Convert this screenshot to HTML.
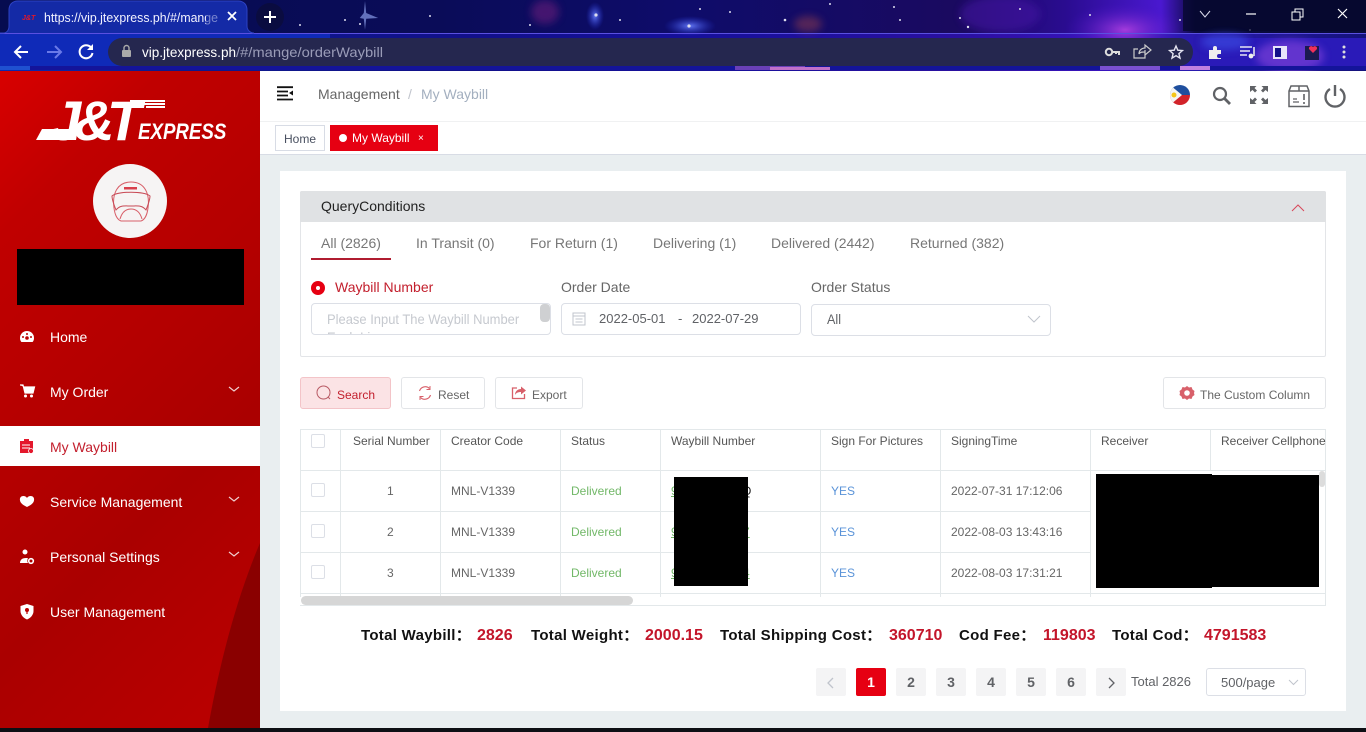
<!DOCTYPE html>
<html><head><meta charset="utf-8"><title>My Waybill</title>
<style>
*{box-sizing:border-box}
html,body{margin:0;padding:0;width:1366px;height:732px;overflow:hidden;background:#e9eef0;font-family:"Liberation Sans",sans-serif}
.a{position:absolute;white-space:nowrap}
.m{color:#fff;font-size:14px;line-height:16px;left:50px}
.th{top:434px;font-size:12px;line-height:14px;color:#555}
.td{font-size:12px;line-height:14px;color:#666}
.v{background:#e3e8ea;width:1px}
.h{background:#e3e8ea;height:1px}
.cb{left:311px;width:14px;height:14px;border:1px solid #dcdfe6;border-radius:2px;background:#fff}
.pg{top:668px;width:30px;height:28px;background:#f4f4f5;color:#606266;font-size:14px;font-weight:bold;text-align:center;line-height:28px;border-radius:2px}
.btn{top:377px;height:32px;border:1px solid #e3e5e8;border-radius:3px;background:#fff;font-size:12px;color:#666;line-height:34px}
.tab{top:235px;font-size:14px;line-height:16px;color:#777}
.lbl{top:279px;font-size:14px;line-height:16px;color:#666}
.box{border:1px solid #dcdfe6;border-radius:4px;background:#fff;height:32px}
.s{font-size:15px;font-weight:bold;line-height:18px;top:627px;color:#111;letter-spacing:.3px}
.r{color:#c3152a;font-size:16px;letter-spacing:0}
.lg{color:#fff;font-weight:bold;font-style:italic;font-size:56px;line-height:56px;top:93px}
</style></head><body>
<svg class="a" style="left:0;top:0" width="1366" height="71">
<defs>
<linearGradient id="g" x1="0" x2="1"><stop offset="0" stop-color="#0b2ab0"/><stop offset=".12" stop-color="#0c1a8c"/><stop offset=".35" stop-color="#12108a"/><stop offset=".5" stop-color="#15109a"/><stop offset=".7" stop-color="#2a10a0"/><stop offset=".82" stop-color="#3a14c0"/><stop offset=".87" stop-color="#2a1ab0"/><stop offset="1" stop-color="#14127a"/></linearGradient>
<linearGradient id="tg" x1="0" x2="1"><stop offset="0" stop-color="#060c50"/><stop offset=".32" stop-color="#0a0c58"/><stop offset=".5" stop-color="#0e0c6a"/><stop offset=".7" stop-color="#1a0a60"/><stop offset=".78" stop-color="#2a0c90"/><stop offset=".85" stop-color="#4a18d0"/><stop offset=".875" stop-color="#0a0a40"/><stop offset="1" stop-color="#080a38"/></linearGradient>
<radialGradient id="p"><stop offset="0" stop-color="#b040e0" stop-opacity=".9"/><stop offset="1" stop-color="#4010c0" stop-opacity="0"/></radialGradient>
<radialGradient id="b"><stop offset="0" stop-color="#6a80ff" stop-opacity=".9"/><stop offset="1" stop-color="#2030d0" stop-opacity="0"/></radialGradient>
<filter id="bl" x="-50%" y="-50%" width="200%" height="200%"><feGaussianBlur stdDeviation="4"/></filter>
</defs>
<rect width="1366" height="71" fill="url(#g)"/>
<rect width="1366" height="33" fill="url(#tg)"/>
<ellipse cx="1125" cy="30" rx="60" ry="28" fill="url(#p)"/>
<ellipse cx="690" cy="26" rx="26" ry="10" fill="url(#b)"/>
<ellipse cx="595" cy="16" rx="9" ry="14" fill="url(#b)"/>
<ellipse cx="808" cy="24" rx="14" ry="8" fill="#8a3a50" opacity=".55" filter="url(#bl)"/>
<ellipse cx="545" cy="12" rx="14" ry="12" fill="#6a1a7a" opacity=".6" filter="url(#bl)"/>
<ellipse cx="125" cy="14" rx="12" ry="14" fill="url(#b)"/>
<ellipse cx="1000" cy="14" rx="40" ry="18" fill="#4a14a8" opacity=".5" filter="url(#bl)"/>
<g fill="#dde">
<circle cx="530" cy="25" r="1"/><circle cx="620" cy="20" r="1"/><circle cx="700" cy="9" r="1"/><circle cx="730" cy="12" r="1"/><circle cx="900" cy="20" r="1"/><circle cx="960" cy="18" r="1"/><circle cx="968" cy="27" r="1.2"/><circle cx="1020" cy="9" r="1"/><circle cx="1090" cy="15" r="1"/><circle cx="1180" cy="20" r="1"/><circle cx="345" cy="20" r="1"/><circle cx="300" cy="25" r="1"/><circle cx="360" cy="24" r="1"/><circle cx="1250" cy="30" r="1"/><circle cx="894" cy="7" r="1"/><circle cx="430" cy="16" r="1"/><circle cx="830" cy="4" r="1"/><circle cx="596" cy="15" r="1.6"/><circle cx="689" cy="26" r="1.6"/><circle cx="785" cy="20" r="1.3"/>
</g>
<path d="M365 1l1.200 12 12 5-12 .8-1.200 11-1.200-11-4-.8 4-5z" fill="#9fb4ff" opacity=".6"/>
<rect x="1183" width="183" height="31" fill="#06082c" opacity=".75"/>
<rect y="33" width="1366" height="1" fill="#5a50e0"/>
<!-- tab -->
<path d="M0 33h3c4 0 6-3 6-7V10c0-5 3-9 9-9h220c6 0 9 4 9 9v16c0 4 3 7 7 7" fill="#142aa6" stroke="#2c42c4"/>
<rect y="34" width="330" height="36" fill="#0f2ab8"/>
<rect x="1200" y="38" width="166" height="32" fill="#2a1ab8"/>
<ellipse cx="1290" cy="56" rx="34" ry="16" fill="#7a40d8" opacity=".7" filter="url(#bl)"/>
<ellipse cx="1225" cy="42" rx="24" ry="8" fill="#3a48e0" opacity=".7" filter="url(#bl)"/>
<rect y="66" width="1366" height="4" fill="#14149a"/>
<rect x="1100" y="66" width="60" height="4" fill="#7a50d0"/>
<rect x="1180" y="66" width="30" height="4" fill="#c080e0"/>
<rect x="735" y="66" width="70" height="4" fill="#6a40b8"/>
<rect x="770" y="67" width="60" height="3" fill="#c070c8"/>
<rect x="0" y="66" width="30" height="4" fill="#1f50d0"/>
<!-- omnibox -->
<rect x="108" y="38" width="1085" height="28" rx="14" fill="#25274f"/>
<text x="22" y="20" font-family="Liberation Sans" font-size="7" font-weight="bold" font-style="italic" fill="#e0182a">J&amp;T</text>
<text x="44" y="22" font-family="Liberation Sans" font-size="12.5" fill="#f2f2ff" textLength="174" lengthAdjust="spacingAndGlyphs">https://vip.jtexpress.ph/#/mange</text>
<rect x="206" y="6" width="16" height="20" fill="#142aa6" opacity=".55"/>
<path d="M228 12l8 8M236 12l-8 8" stroke="#fff" stroke-width="1.8"/>
<circle cx="270" cy="17" r="14" fill="#0a0c40"/>
<path d="M264 17h12M270 11v12" stroke="#fff" stroke-width="2"/>
<path d="M28 52H16m5-6l-6 6 6 6" stroke="#fff" stroke-width="2" fill="none"/>
<path d="M47 52h14m-6-6l6 6-6 6" stroke="#6a7ae8" stroke-width="2" fill="none"/>
<path d="M92 49a6.500 6.500 0 1 0 .5 4" stroke="#fff" stroke-width="2" fill="none"/><path d="M93 44v6h-6z" fill="#fff"/>
<rect x="122" y="50" width="9" height="7" rx="1" fill="#aaa"/><path d="M124 50v-2a2.500 2.500 0 0 1 5 0v2" stroke="#aaa" stroke-width="1.400" fill="none"/>
<text x="142" y="57" font-family="Liberation Sans" font-size="14" fill="#fff" textLength="94" lengthAdjust="spacingAndGlyphs">vip.jtexpress.ph</text>
<text x="236" y="57" font-family="Liberation Sans" font-size="14" fill="#9a9cb8" textLength="147" lengthAdjust="spacingAndGlyphs">/#/mange/orderWaybill</text>
<circle cx="1109" cy="52" r="3.200" fill="none" stroke="#ddd" stroke-width="2"/><path d="M1112 52h7v3M1116 52v2" stroke="#ddd" stroke-width="2" fill="none"/>
<path d="M1145 50v8h-11v-9h4M1139 54c0-4 3-6 6-6v-3l6 5-6 5v-3c-3 0-5 0-6 2z" stroke="#ccc" stroke-width="1.200" fill="none"/>
<path d="M1176 46l1.800 4.200 4.600.4-3.500 3 1.100 4.500-4-2.400-4 2.400 1.100-4.500-3.500-3 4.600-.4z" fill="none" stroke="#e4e4f0" stroke-width="1.400"/>
<path d="M1209 50h4v-2a2 2 0 0 1 4 0v2h4v4h-2a2 2 0 0 0 0 4h2v1h-12z" fill="#eee"/>
<path d="M1240 47h12M1240 51h10M1240 55h7" stroke="#e6e6f4" stroke-width="1.500"/><path d="M1254 47v9" stroke="#eee" stroke-width="1.500"/><circle cx="1251" cy="56" r="2.400" fill="#eee"/>
<rect x="1273" y="46" width="14" height="13" fill="#e8e4fa"/><rect x="1275" y="48" width="6" height="9" fill="#14128a"/>
<rect x="1305" y="46" width="14" height="14" fill="#1a1a50"/><path d="M1313 53l-4-4a2.300 2.300 0 0 1 4-2 2.300 2.300 0 0 1 4 2z" fill="#f0305a"/>
<circle cx="1344" cy="47" r="1.500" fill="#ddd"/><circle cx="1344" cy="52" r="1.500" fill="#ddd"/><circle cx="1344" cy="57" r="1.500" fill="#ddd"/>
<path d="M1200 11l5 6 5-6" stroke="#dde" fill="none"/>
<path d="M1246 14h10" stroke="#fff" stroke-width="1.200"/>
<path d="M1292 12h8v8h-8zM1295 12v-3h8v8h-3" stroke="#fff" stroke-width="1" fill="none"/>
<path d="M1338 9l9 9M1347 9l-9 9" stroke="#fff" stroke-width="1.200"/>
</svg>

<!-- sidebar -->
<div class="a" style="left:0;top:71px;width:260px;height:657px;background:linear-gradient(135deg,#d80000 0%,#c00000 18%,#b40000 45%,#aa0000 65%,#bc0000 100%)"></div>
<svg class="a" style="left:0;top:540px" width="260" height="188"><path d="M260 3V188H208C222 110 240 50 260 3z" fill="#8a0000"/></svg>
<svg class="a" style="left:30px;top:96px" width="135" height="46"><path d="M6 44l6-11h36l-2 11z" fill="#fff"/><path d="M100 4h48l-2 2H100zM113 7h32l-2 2H113zM116 10h24l-2 2H116z" fill="#fff"/></svg>
<div class="a lg" style="left:50px">J</div>
<div class="a lg" style="left:74px">&amp;</div>
<div class="a lg" style="left:107px">T</div>
<div class="a" style="left:138px;top:119px;color:#fff;font-weight:bold;font-style:italic;font-size:22px;line-height:26px;transform-origin:0 0;transform:scaleX(.85)">EXPRESS</div>
<div class="a" style="left:93px;top:164px;width:74px;height:74px;border-radius:50%;background:#f6f4f4"></div>
<svg class="a" style="left:108px;top:178px" width="46" height="46"><path d="M6 30c-2-14 3-26 17-26s19 12 17 26c-1 8-4 12-7 13H13c-3-1-6-5-7-13z" fill="none" stroke="#d8606a" stroke-width="1"/><path d="M4 18c6-5 32-5 38 0 0 4-2 9-4 14-4-5-8-4-15-4s-11-1-15 4c-2-5-4-10-4-14z" fill="none" stroke="#c84a56" stroke-width="1"/><path d="M12 41c2-7 6-10 11-10s9 3 11 10" fill="none" stroke="#d8606a"/><path d="M16 9h13v2.500H16z" fill="#d8404c"/></svg>
<div class="a" style="left:17px;top:249px;width:227px;height:56px;background:#000"></div>

<div class="a" style="left:0;top:426px;width:260px;height:40px;background:#fff"></div>
<div class="a m" style="top:329px">Home</div>
<div class="a m" style="top:384px">My Order</div>
<div class="a m" style="top:439px;color:#c3202e">My Waybill</div>
<div class="a m" style="top:494px">Service Management</div>
<div class="a m" style="top:549px">Personal Settings</div>
<div class="a m" style="top:604px">User Management</div>
<svg class="a" style="left:0;top:320px" width="260" height="310">
<g fill="none" stroke="#f0d0d0" stroke-width="1.200"><path d="M229 67l5 4 5-4M229 177l5 4 5-4M229 232l5 4 5-4"/></g>
<path d="M27 11a7 7 0 0 0-7 7c0 2 .6 3 1.400 4h11.200c.8-1 1.400-2 1.400-4a7 7 0 0 0-7-7z" fill="#fff"/><circle cx="27" cy="18" r="1.800" fill="#b00"/><circle cx="23" cy="17" r="1" fill="#b00"/><circle cx="31" cy="17" r="1" fill="#b00"/><circle cx="27" cy="14" r="1" fill="#b00"/>
<path d="M20 65h3l2 8h8l1.500-6H24" fill="#fff" stroke="#fff" stroke-width="1.200"/><circle cx="25.500" cy="76" r="1.500" fill="#fff"/><circle cx="31.500" cy="76" r="1.500" fill="#fff"/>
<path d="M20 121h4v-2h5v2h4v10l-1 2H20z" fill="#e4182c"/><path d="M22 125h8M22 128h8" stroke="#fff"/><circle cx="31" cy="131" r="2.500" fill="#e4182c" stroke="#fff" stroke-width=".8"/>
<path d="M27 178c-1.500-3-8-3-7 2.500.5 3 4 5 7 6.500 3-1.500 6.500-3.500 7-6.500 1-5.500-5.500-5.500-7-2.500z" fill="#fff"/>
<circle cx="25" cy="232" r="2.500" fill="#fff"/><path d="M20 243c0-3 2-5 6-5 1 0 2 .2 2 .5-1 1.500-1 3 0 4.500z" fill="#fff"/><circle cx="31" cy="241" r="2.300" fill="none" stroke="#fff" stroke-width="1.600"/>
<path d="M27 284l6.500 2v5c0 4-3 7-6.500 8.500-3.500-1.500-6.500-4.500-6.500-8.500v-5z" fill="#fff"/><circle cx="27" cy="290" r="2" fill="#b00"/><path d="M27 291v3" stroke="#b00" stroke-width="1.200"/>
</svg>

<!-- header -->
<div class="a" style="left:260px;top:71px;width:1106px;height:51px;background:#fff;border-bottom:1px solid #f0f1f2"></div>
<div class="a" style="left:260px;top:122px;width:1106px;height:33px;background:#fff;border-bottom:1px solid #d8dce5"></div>
<svg class="a" style="left:277px;top:86px" width="17" height="15"><path d="M0 1.200h16M0 5.500h11M0 9.500h11M0 13.500h16" stroke="#111" stroke-width="1.800"/><path d="M16 4.500v5l-4-2.500z" fill="#111"/></svg>
<div class="a" style="left:318px;top:86px;font-size:14px;line-height:16px;color:#666">Management</div>
<div class="a" style="left:408px;top:86px;font-size:14px;line-height:16px;color:#c0c4cc">/</div>
<div class="a" style="left:421px;top:86px;font-size:14px;line-height:16px;color:#a3afbf">My Waybill</div>
<svg class="a" style="left:1160px;top:80px" width="190" height="30">
<defs><clipPath id="fl"><circle cx="20" cy="15" r="10"/></clipPath></defs>
<g clip-path="url(#fl)"><rect x="10" y="5" width="20" height="10" fill="#1f4f9e"/><rect x="10" y="15" width="20" height="10" fill="#d2232a"/><path d="M10 5l12 10-12 10z" fill="#f4f4f4"/><circle cx="14" cy="15" r="2.500" fill="#f5c518"/></g>
<circle cx="60" cy="14" r="6" fill="none" stroke="#606266" stroke-width="2.200"/><path d="M64.500 18.500l5.500 5.500" stroke="#606266" stroke-width="2.800"/>
<g fill="#606266"><path d="M90 6h6.500l-2 2 2.500 2.500-2 2L92.500 10l-2.500 2zM108 6h-6.500l2 2-2.500 2.500 2 2 2.500-2.500 2.500 2z"/><path d="M90 24h6.500l-2-2 2.500-2.500-2-2-2.500 2.500-2.500-2zM108 24h-6.500l2-2-2.500-2.500 2-2 2.500 2.500 2.500-2z"/></g>
<path d="M129 11l2-5h16l2 5v15.500h-20zM129 11h20M139 6v5" fill="none" stroke="#606266" stroke-width="1.500"/><path d="M133 22h6M133 19h4" stroke="#606266" stroke-width="1.300"/><path d="M144 14v6M144 22v2" stroke="#606266" stroke-width="1.600"/>
<path d="M170 9a9.500 9.500 0 1 0 10 0" fill="none" stroke="#606266" stroke-width="2.400"/><path d="M175 5v11" stroke="#606266" stroke-width="2.400"/>
</svg>
<div class="a" style="left:275px;top:125px;width:50px;height:26px;border:1px solid #d8dce5;background:#fff;font-size:12px;line-height:26px;color:#495060;text-align:center">Home</div>
<div class="a" style="left:330px;top:125px;width:108px;height:26px;background:#e60012;font-size:12px;line-height:27px;color:#fff"><span class="a" style="left:9px;top:9px;width:8px;height:8px;border-radius:50%;background:#fff"></span><span class="a" style="left:22px">My Waybill</span><span class="a" style="left:88px;font-size:10px">×</span></div>

<!-- main card -->
<div class="a" style="left:280px;top:171px;width:1066px;height:540px;background:#fff"></div>
<div class="a" style="left:300px;top:191px;width:1026px;height:166px;border:1px solid #e3e5e8;border-radius:2px;background:#fff"></div>
<div class="a" style="left:300px;top:191px;width:1026px;height:31px;background:#e0e2e4;border-radius:2px 2px 0 0"></div>
<div class="a" style="left:321px;top:198px;font-size:14px;line-height:16px;color:#222">QueryConditions</div>
<svg class="a" style="left:1291px;top:203px" width="14" height="9"><path d="M1 8l6-6 6 6" stroke="#d8485a" fill="none"/></svg>
<div class="a tab" style="left:321px">All (2826)</div>
<div class="a" style="left:311px;top:258px;width:80px;height:2px;background:#b01c30"></div>
<div class="a tab" style="left:416px">In Transit (0)</div>
<div class="a tab" style="left:530px">For Return (1)</div>
<div class="a tab" style="left:653px">Delivering (1)</div>
<div class="a tab" style="left:771px">Delivered (2442)</div>
<div class="a tab" style="left:910px">Returned (382)</div>

<div class="a" style="left:311px;top:281px;width:14px;height:14px;border-radius:50%;background:#e60012"></div>
<div class="a" style="left:316px;top:286px;width:4px;height:4px;border-radius:50%;background:#fff"></div>
<div class="a lbl" style="left:335px;color:#c3202e">Waybill Number</div>
<div class="a lbl" style="left:561px">Order Date</div>
<div class="a lbl" style="left:811px">Order Status</div>

<div class="a box" style="left:311px;top:303px;width:240px;overflow:hidden"><div class="a" style="left:15px;top:7px;font-size:14px;line-height:16px;color:#c6c9cf;transform-origin:0 0;transform:scaleX(.925)">Please Input The Waybill Number</div><div class="a" style="left:15px;top:25px;font-size:14px;line-height:16px;color:#c6c9cf;transform-origin:0 0;transform:scaleX(.925)">Each Line</div></div>
<div class="a" style="left:540px;top:304px;width:10px;height:18px;background:#cfd0d2;border-radius:4px"></div>
<div class="a box" style="left:561px;top:303px;width:240px"></div>
<svg class="a" style="left:572px;top:311px" width="15" height="15"><rect x="1" y="2" width="12" height="12" fill="none" stroke="#c0c4cc"/><path d="M1 5h12M3.500 8h7M3.500 11h7" stroke="#c0c4cc"/></svg>
<div class="a" style="left:599px;top:311px;font-size:13px;line-height:16px;color:#606266">2022-05-01</div>
<div class="a" style="left:678px;top:311px;font-size:13px;line-height:16px;color:#606266">-</div>
<div class="a" style="left:692px;top:311px;font-size:13px;line-height:16px;color:#606266">2022-07-29</div>
<div class="a box" style="left:811px;top:304px;width:240px"></div>
<div class="a" style="left:827px;top:311px;font-size:14px;line-height:16px;color:#606266;transform-origin:0 0;transform:scaleX(.9)">All</div>
<svg class="a" style="left:1027px;top:315px" width="14" height="9"><path d="M1 1l6 6 6-6" stroke="#c0c4cc" fill="none"/></svg>

<div class="a btn" style="left:300px;width:91px;background:#fbe3e5;border-color:#f3c4c8;color:#c3202e;padding-left:36px">Search</div>
<svg class="a" style="left:316px;top:385px" width="16" height="16"><circle cx="7.500" cy="7.500" r="6.500" fill="none" stroke="#b85a64"/><path d="M12 12l2 2" stroke="#b85a64"/></svg>
<div class="a btn" style="left:401px;width:84px;padding-left:36px">Reset</div>
<svg class="a" style="left:417px;top:385px" width="16" height="16"><path d="M2.500 6a6 6 0 0 1 10-2.500M13.500 10a6 6 0 0 1-10 2.500" fill="none" stroke="#d8606a" stroke-width="1.200"/><path d="M13 1v3.500H9.500M3 15v-3.500h3.500" fill="none" stroke="#d8606a" stroke-width="1"/></svg>
<div class="a btn" style="left:495px;width:88px;padding-left:36px">Export</div>
<svg class="a" style="left:511px;top:385px" width="16" height="16"><path d="M6 3H1.500v10.500h12V9" fill="none" stroke="#d8606a" stroke-width="1.300"/><path d="M4 10c0-4 3-6 6-6V1.500l5 4-5 4V7c-3 0-5 1-6 3z" fill="#d8606a"/></svg>
<div class="a btn" style="left:1163px;width:163px;padding-left:36px">The Custom Column</div>
<svg class="a" style="left:1179px;top:385px" width="16" height="16"><path d="M8 1l2 1.500 2.500-.5 1 2.500L15.500 6 15 8l.5 2-2 1.500-1 2.500-2.500-.5L8 15l-2-1.500-2.500.5-1-2.500L.5 10 1 8 .5 6l2-1.500 1-2.500 2.500.5z" fill="#d8606a"/><circle cx="8" cy="8" r="2.800" fill="#fff"/></svg>

<!-- table -->
<div class="a h" style="left:300px;top:429px;width:1026px"></div>
<div class="a h" style="left:300px;top:470px;width:1026px"></div>
<div class="a h" style="left:300px;top:511px;width:790px"></div>
<div class="a h" style="left:300px;top:552px;width:790px"></div>
<div class="a h" style="left:300px;top:593px;width:1026px"></div>
<div class="a h" style="left:300px;top:605px;width:1026px"></div>
<div class="a v" style="left:300px;top:429px;height:168px"></div>
<div class="a v" style="left:340px;top:429px;height:168px"></div>
<div class="a v" style="left:440px;top:429px;height:168px"></div>
<div class="a v" style="left:560px;top:429px;height:168px"></div>
<div class="a v" style="left:660px;top:429px;height:168px"></div>
<div class="a v" style="left:820px;top:429px;height:168px"></div>
<div class="a v" style="left:940px;top:429px;height:168px"></div>
<div class="a v" style="left:1090px;top:429px;height:168px"></div>
<div class="a v" style="left:1210px;top:429px;height:41px"></div>
<div class="a v" style="left:1325px;top:429px;height:176px"></div>

<div class="a cb" style="top:434px"></div><div class="a cb" style="top:483px"></div><div class="a cb" style="top:524px"></div><div class="a cb" style="top:565px"></div>
<div class="a th" style="left:353px">Serial Number</div>
<div class="a th" style="left:451px">Creator Code</div>
<div class="a th" style="left:571px">Status</div>
<div class="a th" style="left:671px">Waybill Number</div>
<div class="a th" style="left:831px">Sign For Pictures</div>
<div class="a th" style="left:951px">SigningTime</div>
<div class="a th" style="left:1101px">Receiver</div>
<div class="a th" style="left:1221px">Receiver Cellphone</div>

<div class="a td" style="left:387px;top:484px">1</div>
<div class="a td" style="left:387px;top:525px">2</div>
<div class="a td" style="left:387px;top:566px">3</div>
<div class="a td" style="left:451px;top:484px">MNL-V1339</div>
<div class="a td" style="left:451px;top:525px">MNL-V1339</div>
<div class="a td" style="left:451px;top:566px">MNL-V1339</div>
<div class="a td" style="left:571px;top:484px;color:#72b868">Delivered</div>
<div class="a td" style="left:571px;top:525px;color:#72b868">Delivered</div>
<div class="a td" style="left:571px;top:566px;color:#72b868">Delivered</div>
<div class="a td" style="left:671px;top:484px;color:#72b868;text-decoration:underline">9</div>
<div class="a td" style="left:671px;top:525px;color:#72b868;text-decoration:underline">9</div>
<div class="a td" style="left:671px;top:566px;color:#72b868;text-decoration:underline">9</div>
<div class="a td" style="left:742px;top:484px;color:#222">Q</div>
<div class="a td" style="left:743px;top:525px;color:#72b868;text-decoration:underline">7</div>
<div class="a td" style="left:743px;top:566px;color:#72b868;text-decoration:underline">4</div>
<div class="a td" style="left:831px;top:484px;color:#5a93d8">YES</div>
<div class="a td" style="left:831px;top:525px;color:#5a93d8">YES</div>
<div class="a td" style="left:831px;top:566px;color:#5a93d8">YES</div>
<div class="a td" style="left:951px;top:484px">2022-07-31 17:12:06</div>
<div class="a td" style="left:951px;top:525px">2022-08-03 13:43:16</div>
<div class="a td" style="left:951px;top:566px">2022-08-03 17:31:21</div>

<div class="a" style="left:674px;top:477px;width:74px;height:109px;background:#000"></div>
<div class="a" style="left:1096px;top:474px;width:116px;height:114px;background:#000"></div>
<div class="a" style="left:1209px;top:475px;width:110px;height:112px;background:#000"></div>
<div class="a" style="left:1319px;top:471px;width:6px;height:16px;background:#dcdcdc;border-radius:3px"></div>
<div class="a" style="left:301px;top:596px;width:332px;height:9px;background:#d6d6d6;border-radius:5px"></div>

<!-- summary -->
<div class="a s" style="left:361px">Total Waybill：</div><div class="a s r" style="left:477px">2826</div>
<div class="a s" style="left:531px">Total Weight：</div><div class="a s r" style="left:645px">2000.15</div>
<div class="a s" style="left:720px">Total Shipping Cost：</div><div class="a s r" style="left:889px">360710</div>
<div class="a s" style="left:959px">Cod Fee：</div><div class="a s r" style="left:1043px">119803</div>
<div class="a s" style="left:1112px">Total Cod：</div><div class="a s r" style="left:1204px">4791583</div>

<!-- pagination -->
<div class="a pg" style="left:816px"></div>
<svg class="a" style="left:826px;top:677px" width="10" height="12"><path d="M7 1L2 6l5 5" stroke="#c0c4cc" stroke-width="1.300" fill="none"/></svg>
<div class="a pg" style="left:856px;background:#e60012;color:#fff">1</div>
<div class="a pg" style="left:896px">2</div>
<div class="a pg" style="left:936px">3</div>
<div class="a pg" style="left:976px">4</div>
<div class="a pg" style="left:1016px">5</div>
<div class="a pg" style="left:1056px">6</div>
<div class="a pg" style="left:1096px"></div>
<svg class="a" style="left:1106px;top:677px" width="10" height="12"><path d="M3 1l5 5-5 5" stroke="#606266" stroke-width="1.300" fill="none"/></svg>
<div class="a" style="left:1131px;top:674px;font-size:13px;line-height:16px;color:#606266">Total 2826</div>
<div class="a" style="left:1206px;top:668px;width:100px;height:28px;border:1px solid #dcdfe6;border-radius:3px;background:#fff;font-size:13px;line-height:27px;color:#606266;padding-left:14px">500/page</div>
<svg class="a" style="left:1288px;top:679px" width="11" height="7"><path d="M1 1l4.500 4.500L10 1" stroke="#c0c4cc" fill="none"/></svg>

<div class="a" style="left:0;top:728px;width:1366px;height:4px;background:#0d0f14"></div>
</body></html>
